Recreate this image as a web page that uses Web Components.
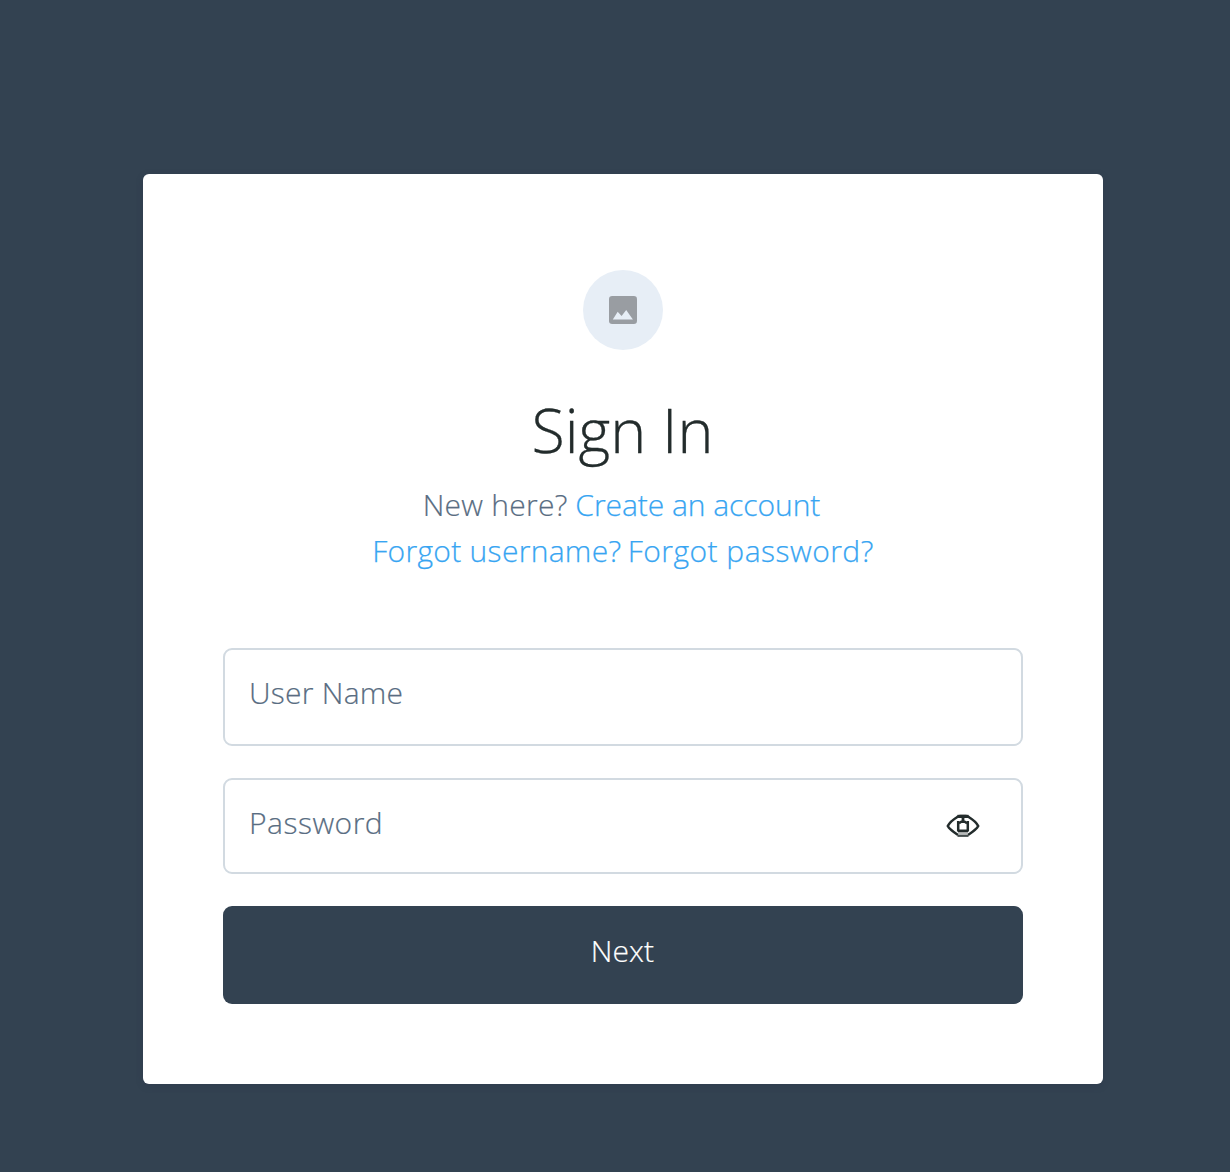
<!DOCTYPE html>
<html lang="en">
<head>
<meta charset="utf-8">
<title>Sign In</title>
<style>
html,body{margin:0;height:100%}
body{background:#334251;font-family:"Open Sans","Noto Sans",sans-serif;font-weight:300;overflow:hidden}
</style>
</head>
<body>
<sign-in-page></sign-in-page>
<script>
class BaseElement extends HTMLElement {
  constructor() {
    super();
    this.attachShadow({ mode: "open" }).innerHTML = this.render();
  }
}

customElements.define("user-avatar", class extends BaseElement {
  render() {
    return `<style>
      :host{display:flex;width:80px;height:80px;border-radius:50%;background:#e7eef6;align-items:center;justify-content:center}
      svg{display:block}
    </style>
    <svg width="28" height="28" viewBox="0 0 28 28"><rect width="28" height="28" rx="3.2" fill="#999da2"/><path d="M3.8 23.6 8.7 15.8 12.6 20 17.2 14 23.9 23.6Z" fill="#e7eef6"/></svg>`;
  }
});

customElements.define("text-link", class extends BaseElement {
  render() {
    return `<style>:host{display:inline;color:#37a5f2;-webkit-text-stroke:.25px #37a5f2}a{color:inherit;text-decoration:none}</style><a href="#"><slot></slot></a>`;
  }
});

customElements.define("form-field", class extends BaseElement {
  render() {
    return `<style>
      :host{display:flex;box-sizing:border-box;width:800px;height:98px;border:2px solid #d2dae1;border-radius:9px;padding:0 41px 9px 24px;align-items:center;justify-content:space-between;background:#fff;color:#596d82;font-size:30px;line-height:40px;-webkit-text-stroke:.2px #596d82}
      ::slotted(eye-icon){margin-top:6px}
    </style><span><slot></slot></span><slot name="icon"></slot>`;
  }
});

customElements.define("eye-icon", class extends BaseElement {
  render() {
    return `<style>:host{display:block;width:34px;height:24px}svg{display:block}</style>
    <svg width="34" height="24" viewBox="0 0 34 24" fill="none" stroke="#232c2c">
      <path d="M12 21C8.5 18.7 3.2 15 1.8 12C3.2 9 7.5 5.3 11 3.2Q12 2.1 14 2.1H20Q22 2.1 23 3.2C26.5 5.3 30.8 9 32.2 12C30.8 15 25.5 18.7 22 21" stroke-width="2.5"/>
      <path d="M11.5 2.4H22.5" stroke-width="3.2"/>
      <path d="M17 3V8" stroke-width="2.8"/>
      <path d="M12.2 7V17.5M21.8 7V17.5" stroke-width="2.5"/>
      <path d="M13 9.3 15.3 7.8H18.7L21 9.3" stroke-width="2.4"/>
      <path d="M12 17H22" stroke-width="3"/>
      <path d="M12 19.5H22" stroke="#b8bbbb" stroke-width="2"/>
      <path d="M11.5 21.8H22.5" stroke="#454d4d" stroke-width="2.2"/>
    </svg>`;
  }
});

customElements.define("submit-button", class extends BaseElement {
  render() {
    return `<style>
      :host{display:block;width:800px}
      button{display:block;box-sizing:border-box;width:100%;height:98px;border:0;border-radius:9px;padding:0 1px 8px 0;background:#334251;color:#fff;font:300 30px/40px "Open Sans",sans-serif;letter-spacing:.1px;-webkit-text-stroke:.2px #fff}
    </style><button type="button"><slot></slot></button>`;
  }
});

customElements.define("sign-in-page", class extends BaseElement {
  render() {
    return `<style>
      :host{display:flex;justify-content:center;padding:174px 0 0 16px;box-sizing:border-box;height:1172px}
      main{display:flex;flex-direction:column;align-items:center;box-sizing:border-box;width:960px;height:910px;padding-top:96px;background:#fff;border-radius:6px;box-shadow:0 2px 6px #2a344c66}
      h1{margin:38px 0 0;padding-right:1px;font-size:61px;line-height:84px;font-weight:300;color:#232c2c;white-space:pre;-webkit-text-stroke:.3px #232c2c}
      p{margin:0;font-size:30px;line-height:46px;color:#596d82;white-space:pre;-webkit-text-stroke:.2px #596d82}
      .intro{margin-top:10px;padding-right:3px}
      .new{letter-spacing:.25px}
      .create{letter-spacing:-.05px}
      .fu{letter-spacing:.3px}
      .gap{letter-spacing:-1.5px}
      .fp{letter-spacing:.48px}
      form{display:flex;flex-direction:column;margin-top:74px}
      .username{letter-spacing:.25px}
      .password{letter-spacing:.5px;margin-top:32px;height:96px;padding-bottom:7px}
      submit-button{margin-top:32px}
    </style>
    <main>
      <user-avatar></user-avatar>
      <h1>Sign In</h1>
      <p class="intro"><span class="new">New here?</span> <text-link class="create">Create an account</text-link></p>
      <p><text-link class="fu">Forgot username?</text-link><span class="gap"> </span><text-link class="fp">Forgot password?</text-link></p>
      <form>
        <form-field class="username">User Name</form-field>
        <form-field class="password">Password<eye-icon slot="icon"></eye-icon></form-field>
        <submit-button>Next</submit-button>
      </form>
    </main>`;
  }
});
</script>
</body>
</html>
